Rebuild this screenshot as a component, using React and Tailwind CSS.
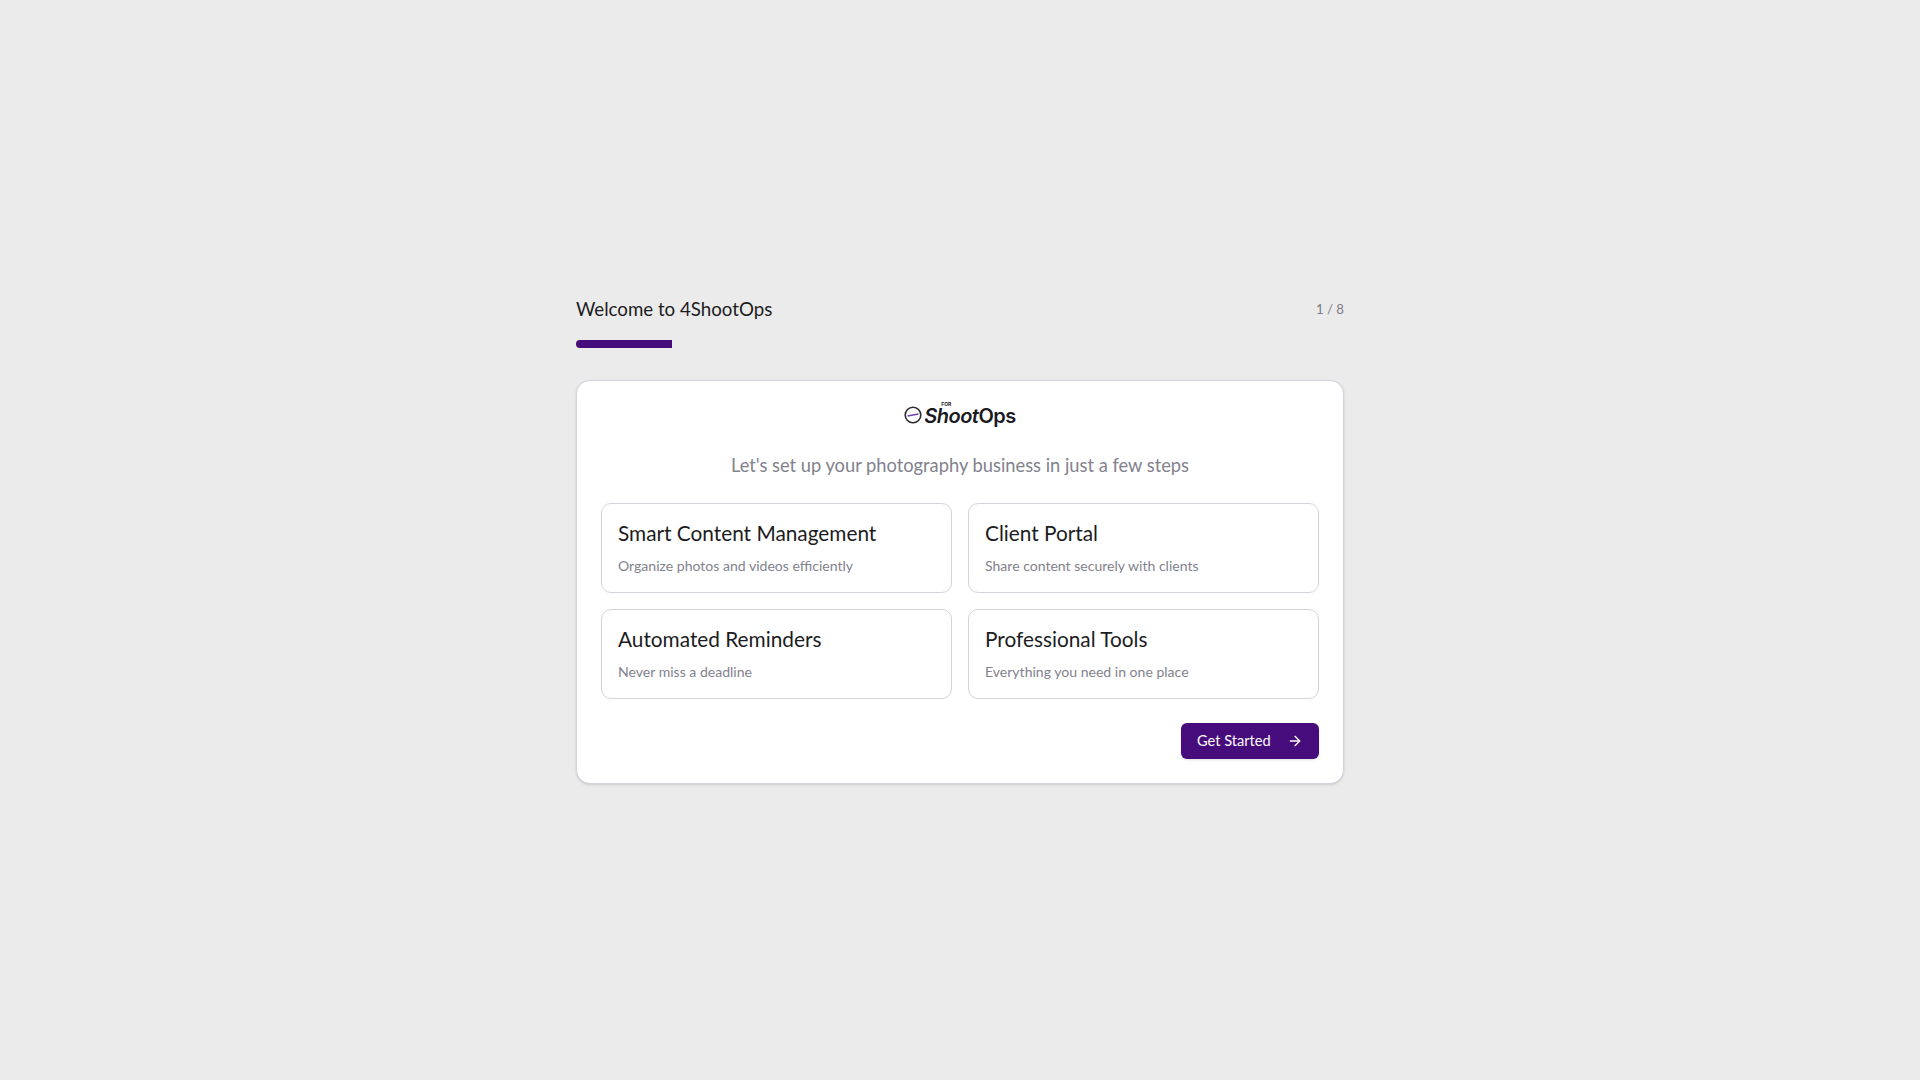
import React from "react";
import { ArrowRight } from "lucide-react";

const features = [
  { title: "Smart Content Management", text: "Organize photos and videos efficiently" },
  { title: "Client Portal", text: "Share content securely with clients" },
  { title: "Automated Reminders", text: "Never miss a deadline" },
  { title: "Professional Tools", text: "Everything you need in one place" },
];

function Logo() {
  return (
    <div className="flex items-start justify-center h-[30px] pt-[1px] text-[#1a1a1f]">
      <svg width="18" height="18" viewBox="0 0 18 18" fill="none" className="mr-[2px]">
        <circle cx="9" cy="9" r="7.8" stroke="#2a2a30" strokeWidth="1.6" />
        <path d="M3.5 10 L14.5 8" stroke="#6d3fb5" strokeWidth="1.4" />
      </svg>
      <span className="relative font-['Inter',sans-serif] font-semibold text-[20px] leading-[20px] tracking-[-0.5px]">
        <span className="italic">Shoot</span>
        <span>Ops</span>
        <span className="absolute left-[17px] top-[-4px] text-[5px] font-bold leading-none tracking-normal">FOR</span>
      </span>
    </div>
  );
}

export default function App() {
  return (
    <div className="min-h-screen bg-[#ebebeb] flex items-center justify-center font-['Lato','Noto_Sans',sans-serif]">
      <div className="w-[768px]">
        <div className="flex items-start justify-between h-[28px] mb-[16px]">
          <h1 className="text-[18.7px] leading-[27px] font-normal text-[#1c1c22]">Welcome to 4ShootOps</h1>
          <span className="mt-[3px] text-[13.2px] leading-[20px] text-[#7b7b85]">1 / 8</span>
        </div>
        <div className="h-[8px] mb-[32px]">
          <div className="h-[8px] w-[96px] bg-[#470c7b] rounded-l-full" />
        </div>
        <div className="bg-white border border-[#d3d5de] rounded-[14px] shadow-sm p-[24px]">
          <Logo />
          <p className="mt-[16px] text-center text-[18.3px] leading-[28px] text-[#82828c]">
            Let's set up your photography business in just a few steps
          </p>
          <div className="grid grid-cols-2 gap-[16px] mt-[24px]">
            {features.map((f) => (
              <div key={f.title} className="border border-[#d3d3de] rounded-[10px] px-[16px] pt-[15px] h-[90px]">
                <h3 className="text-[20.8px] leading-[28px] font-normal text-[#1c1c22]">{f.title}</h3>
                <p className="mt-[9px] text-[14.05px] leading-[19px] text-[#82828c]">{f.text}</p>
              </div>
            ))}
          </div>
          <div className="flex justify-end mt-[24px]">
            <button className="flex items-center h-[36px] w-[138px] px-[16px] justify-between rounded-[6px] bg-[#470c7b] text-[14.6px] text-white shadow-sm">
              <span>Get Started</span>
              <ArrowRight size={16} className="text-white" />
            </button>
          </div>
        </div>
      </div>
    </div>
  );
}
